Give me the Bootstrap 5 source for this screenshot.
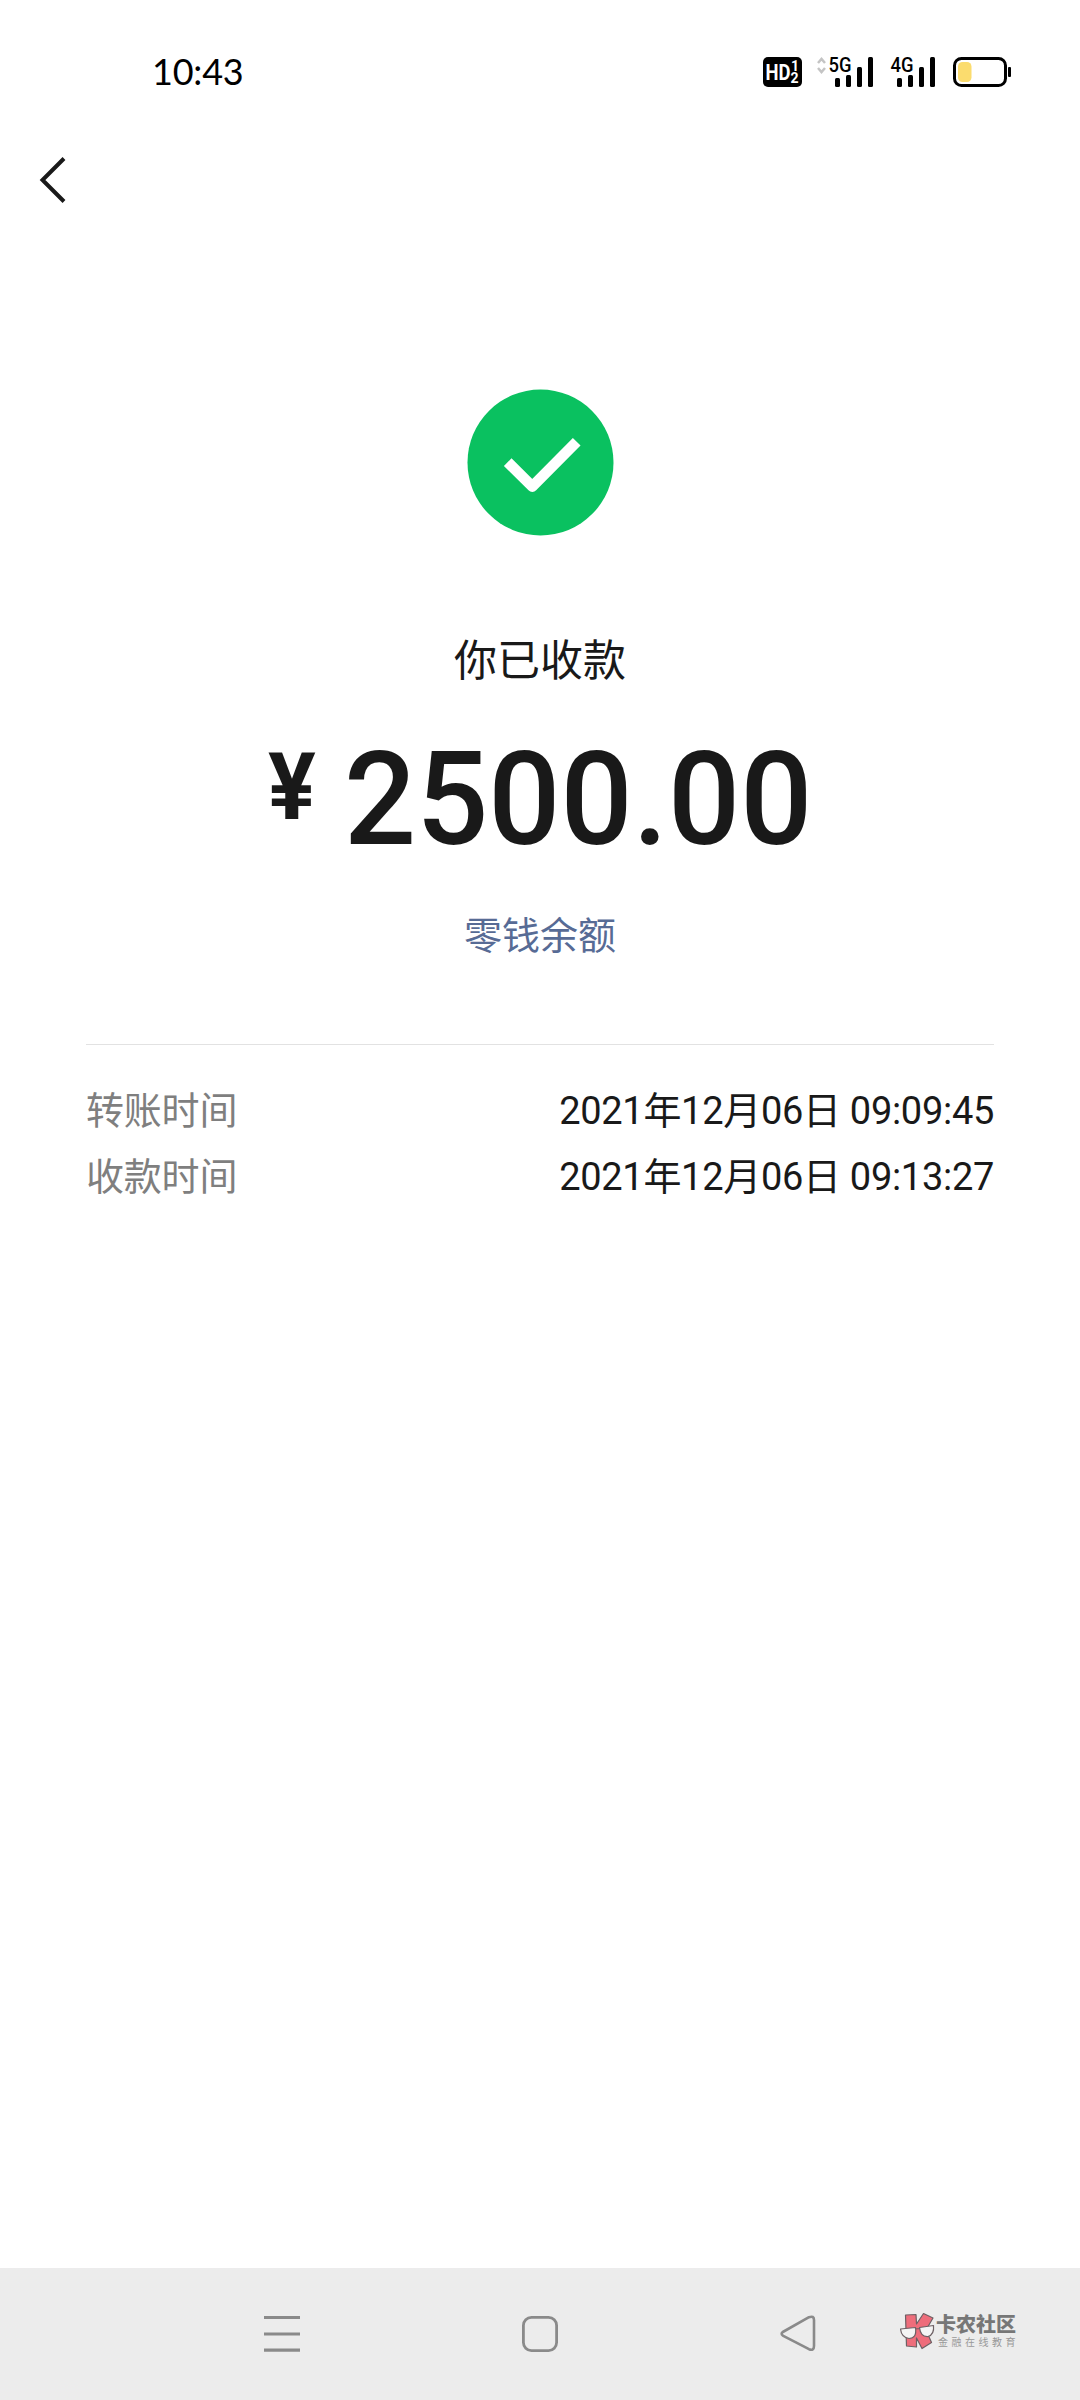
<!DOCTYPE html>
<html lang="zh-CN">
<head>
<meta charset="utf-8">
<meta name="viewport" content="width=device-width, initial-scale=1">
<title>收款详情</title>
<link rel="stylesheet" href="https://cdn.jsdelivr.net/npm/bootstrap@5.3.0/dist/css/bootstrap.min.css">
<style>
body{font-family:Roboto,"Noto Sans CJK SC",sans-serif;color:#191919;background:#fff}
.screen{width:1080px;height:2400px;overflow:hidden}
.status-bar{height:144px;padding-left:152px;padding-right:68px}
.clock{font:400 36px/44px Lato,sans-serif;color:#000;margin-top:49px;letter-spacing:-.2px}
.status-icons{margin-top:52px}
.top-bar{height:72px;padding-left:36px}
.result{padding-top:172px}
.result-title{font-size:43px;line-height:60px;margin-top:95px}
.amount{margin-top:44px;height:130px;line-height:130px;padding-left:268px}
.amount-sign{font-size:92px;font-weight:700;line-height:106px;width:76px;transform:scaleX(.97);transform-origin:0 0}
.amount-num{font-size:130px;font-weight:500;transform:scaleX(.977);transform-origin:0 0}
.balance-link{font-size:38px;line-height:54px;color:#576b95;margin-top:44px}
.details{margin:81px 86px 0;border-top:1px solid #e2e2e2;padding-top:33px;font-size:38px;line-height:66px}
.details dt{font-weight:400;color:#7f7f7f;letter-spacing:-.2px}
.details dd{letter-spacing:-.3px}
.sys-nav{height:132px;background:#ececec;padding-left:264px}
.nav-icon + .nav-icon{margin-left:222px}
.brand{margin-left:82px;margin-top:-7px}
.brand-name{font:900 20px/21px "Noto Sans CJK SC",sans-serif;color:#777}
.brand-sub{font:400 10px/15px "Noto Sans CJK SC",sans-serif;color:#999;letter-spacing:3.5px;padding-left:2px}
</style>
</head>
<body>
<div class="screen d-flex flex-column">
  <header class="status-bar d-flex justify-content-between align-items-start">
    <div class="clock">10:43</div>
    <svg class="status-icons" width="250" height="40" viewBox="762 52 250 40" font-family="Roboto,sans-serif">
      <rect x="763" y="57" width="39" height="30" rx="5"/>
      <text x="765.5" y="80" font-size="22" font-weight="700" fill="#fff" textLength="25" lengthAdjust="spacingAndGlyphs">HD</text>
      <text x="791" y="71" font-size="14" font-weight="700" fill="#fff">1</text>
      <text x="790.500" y="82.500" font-size="14" font-weight="700" fill="#fff">2</text>
      <path d="M818 63l3.500-4 3.500 4M818 68l3.500 4 3.500-4" fill="none" stroke="#c4c4c4" stroke-width="2.500"/>
      <text x="828.500" y="72" font-size="20" font-weight="500" textLength="23" lengthAdjust="spacingAndGlyphs">5G</text>
      <text x="890.500" y="72" font-size="20" font-weight="500" textLength="23" lengthAdjust="spacingAndGlyphs">4G</text>
      <g id="bars"><rect x="835" y="78" width="5" height="9" rx="1.500"/><rect x="846" y="75" width="5" height="12" rx="1.500"/><rect x="857" y="67" width="5" height="20" rx="1.500"/><rect x="868" y="57" width="5" height="30" rx="1.500"/></g>
      <use href="#bars" x="62"/>
      <rect x="954.500" y="58.500" width="51" height="27" rx="7" fill="none" stroke="#000" stroke-width="3"/>
      <rect x="958" y="62" width="13.500" height="20" rx="4.500" fill="#fbdc6e"/>
      <rect x="1008" y="67" width="3" height="10" rx="1"/>
    </svg>
  </header>
  <nav class="top-bar d-flex align-items-center">
    <svg width="32" height="48" viewBox="36 156 32 48"><path d="M64 158.500L42.500 180 64 201.500" fill="none" stroke="#191919" stroke-width="4"/></svg>
  </nav>
  <main class="result flex-grow-1">
    <svg class="d-block mx-auto" width="148" height="148" viewBox="466 387 148 148"><circle cx="540.500" cy="461.500" r="73" fill="#0ac160"/><path d="M507.700 461.200l24.600 24.300 44.400-44.800" fill="none" stroke="#fff" stroke-width="10.800" stroke-linejoin="round"/></svg>
    <div class="result-title text-center">你已收款</div>
    <div class="amount d-flex align-items-start"><span class="amount-sign">¥</span><span class="amount-num">2500.00</span></div>
    <div class="balance-link text-center">零钱余额</div>
    <dl class="details mb-0">
      <div class="d-flex justify-content-between"><dt>转账时间</dt><dd class="mb-0">2021年12月06日 09:09:45</dd></div>
      <div class="d-flex justify-content-between"><dt>收款时间</dt><dd class="mb-0">2021年12月06日 09:13:27</dd></div>
    </dl>
  </main>
  <footer class="sys-nav d-flex align-items-center">
    <svg class="nav-icon" width="36" height="40" viewBox="0 0 36 40" stroke="#8a8a8a" stroke-width="3.200"><path d="M0 3.500h36M0 20h36M0 36.200h36"/></svg>
    <svg class="nav-icon" width="36" height="40" viewBox="0 0 36 40"><rect x="1.400" y="3.400" width="33.200" height="33.200" rx="8" fill="none" stroke="#8a8a8a" stroke-width="2.800"/></svg>
    <svg class="nav-icon" width="36" height="40" viewBox="0 0 36 40"><path d="M2.800 18L29 3.200Q34 1.400 34 6V32Q34 37 29 35.200L2.800 21.600Q0.500 19.800 2.800 18Z" fill="none" stroke="#8a8a8a" stroke-width="2.600" stroke-linejoin="round"/></svg>
    <div class="brand d-flex align-items-center">
      <svg width="38" height="40" viewBox="898 2310 38 40" stroke="#6d6064" stroke-width="1.200" stroke-linejoin="round">
        <path d="M905.500 2314L916 2313.500 916.500 2323 923.500 2312.500 933 2317 926 2329 931.500 2341.500 922 2347.500 916.500 2337 916.500 2346 906.500 2345Z" fill="#ee6d7b"/>
        <path d="M900.500 2328L915.500 2326.500Q917 2337.500 909 2337.500 901.500 2336.500 900.500 2328ZM919.500 2326.500L933.500 2324.500Q934.500 2333.500 928 2335.500 920.500 2336 919.500 2326.500ZM915.500 2328L919.500 2327.500" fill="#f4f4f4"/>
      </svg>
      <div><div class="brand-name">卡农社区</div><div class="brand-sub">金融在线教育</div></div>
    </div>
  </footer>
</div>
<script src="https://cdn.jsdelivr.net/npm/bootstrap@5.3.0/dist/js/bootstrap.bundle.min.js"></script>
</body>
</html>
